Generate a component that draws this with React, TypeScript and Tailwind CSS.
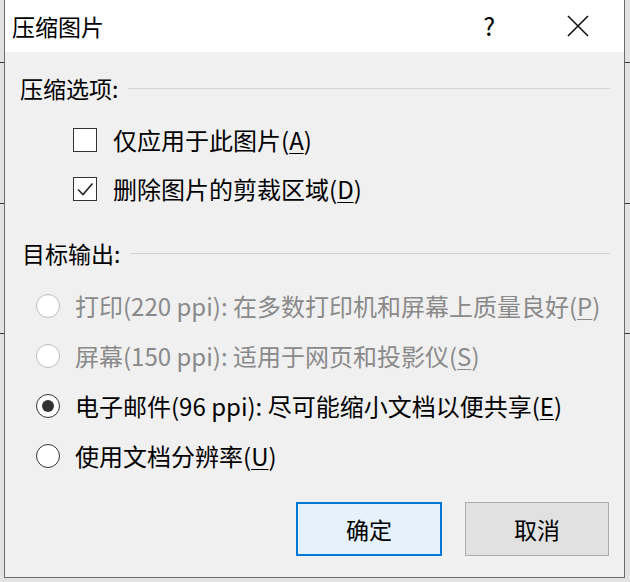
import React from "react";

function Mn({ c }: { c: string }) {
  return <span className="underline underline-offset-[3px] decoration-1">{c}</span>;
}

function CheckRow({ checked, label, mn }: { checked: boolean; label: string; mn: string }) {
  return (
    <div className="flex h-[49px] items-center pl-[68px]">
      <div className="flex h-[24px] w-[24px] items-center justify-center border border-[#333333] bg-white">
        {checked && (
          <svg width="20" height="20" viewBox="0 0 20 20" fill="none">
            <path d="M3 10.5 L8 15.5 L17.5 4.5" stroke="#222222" strokeWidth="1.6" />
          </svg>
        )}
      </div>
      <span className="ml-[16px] text-[24px] text-black">
        {label}(<Mn c={mn} />)
      </span>
    </div>
  );
}

function RadioRow({
  label,
  mn,
  selected = false,
  disabled = false,
}: {
  label: string;
  mn: string;
  selected?: boolean;
  disabled?: boolean;
}) {
  return (
    <div className="flex h-[50px] items-center pl-[31px]">
      <div
        className={
          disabled
            ? "flex h-[24px] w-[24px] items-center justify-center rounded-full border border-[#bcbcbc] bg-white"
            : "flex h-[24px] w-[24px] items-center justify-center rounded-full border-[1.5px] border-[#333333] bg-white"
        }
      >
        {selected && <div className="h-[12px] w-[12px] rounded-full bg-[#333333]" />}
      </div>
      <span className={disabled ? "ml-[15px] text-[24px] text-[#8a8a8a]" : "ml-[15px] text-[24px] text-black"}>
        {label}(<Mn c={mn} />)
      </span>
    </div>
  );
}

function Heading({ text, indent }: { text: string; indent: string }) {
  return (
    <div className={`flex h-[28px] items-center pr-[14px] ${indent}`}>
      <span className="text-[23px] text-black">{text}</span>
      <div className="ml-[10px] h-px flex-1 bg-[#d3d3d3]" />
    </div>
  );
}

export default function App() {
  return (
    <div className="relative flex h-[582px] w-[630px] overflow-hidden bg-[#e2e2e2] font-['Noto_Sans_CJK_SC','Noto_Sans',sans-serif]">
      {/* spreadsheet gridlines peeking out behind the dialog */}
      <div className="absolute left-0 top-[62px] h-px w-full bg-[#333333]" />
      <div className="absolute left-0 top-[203px] h-px w-full bg-[#333333]" />
      <div className="absolute left-0 top-[333px] h-px w-full bg-[#333333]" />

      <div className="relative ml-[4px] flex h-[578px] w-[621px] flex-col border-x border-b border-[#6b6b6b]">
        <div className="flex h-[52px] items-center bg-white pl-[7px]">
          <span className="text-[23px] text-black">压缩图片</span>
          <div className="flex-1" />
          <span className="text-[25px] text-black">?</span>
          <svg className="ml-[72px] mr-[35px]" width="22" height="22" viewBox="0 0 22 22" fill="none">
            <path d="M1 1 L21 21 M21 1 L1 21" stroke="#111111" strokeWidth="1.6" />
          </svg>
        </div>

        <div className="flex flex-1 flex-col bg-[#f0f0f0]">
          <div className="mt-[22px]">
            <Heading text="压缩选项:" indent="pl-[15px]" />
          </div>
          <div className="mt-[13px]">
            <CheckRow checked={false} label="仅应用于此图片" mn="A" />
            <CheckRow checked label="删除图片的剪裁区域" mn="D" />
          </div>

          <div className="mt-[26px]">
            <Heading text="目标输出:" indent="pl-[17px]" />
          </div>
          <div className="mt-[14px]">
            <RadioRow disabled label="打印(220 ppi): 在多数打印机和屏幕上质量良好" mn="P" />
            <RadioRow disabled label="屏幕(150 ppi): 适用于网页和投影仪" mn="S" />
            <RadioRow selected label="电子邮件(96 ppi): 尽可能缩小文档以便共享" mn="E" />
            <RadioRow label="使用文档分辨率" mn="U" />
          </div>

          <div className="mt-[21px] flex justify-end gap-[23px] pr-[15px]">
            <button className="flex h-[54px] w-[146px] items-center justify-center border-2 border-[#0078d7] bg-[#e5f1fb] text-[23px] text-black">
              确定
            </button>
            <button className="flex h-[54px] w-[144px] items-center justify-center border border-[#adadad] bg-[#e1e1e1] text-[23px] text-black">
              取消
            </button>
          </div>
        </div>
      </div>
    </div>
  );
}
